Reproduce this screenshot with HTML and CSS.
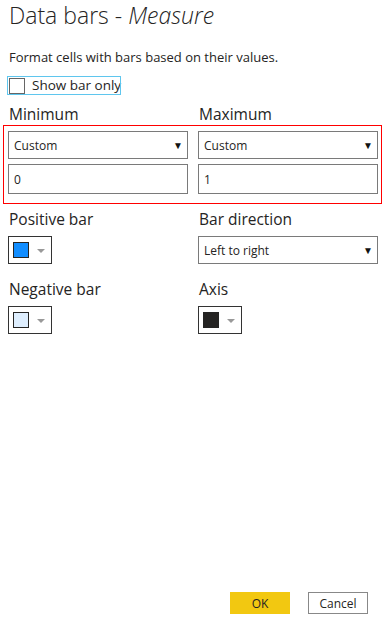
FILE: index.html
```html
<!DOCTYPE html>
<html>
<head>
<meta charset="utf-8">
<link rel="stylesheet" href="styles.css">
</head>
<body>
<div class="dialog">
  <h1 class="title">Data bars - <em>Measure</em></h1>
  <p class="desc">Format cells with bars based on their values.</p>
  <div class="check"><span class="box"></span><span class="check-label">Show bar only</span></div>

  <div class="cols labels-row">
    <div class="label">Minimum</div>
    <div class="label">Maximum</div>
  </div>
  <div class="range">
    <div class="select"><span>Custom</span><span class="arrow">&#9660;</span></div>
    <div class="select"><span>Custom</span><span class="arrow">&#9660;</span></div>
    <div class="input">0</div>
    <div class="input">1</div>
  </div>

  <div class="cols labels-row2">
    <div class="label">Positive bar</div>
    <div class="label">Bar direction</div>
  </div>
  <div class="cols">
    <div class="picker"><span class="swatch pos"></span><span class="caret"></span></div>
    <div class="select"><span>Left to right</span><span class="arrow">&#9660;</span></div>
  </div>

  <div class="cols labels-row3">
    <div class="label">Negative bar</div>
    <div class="label">Axis</div>
  </div>
  <div class="cols">
    <div class="picker"><span class="swatch neg"></span><span class="caret"></span></div>
    <div class="picker"><span class="swatch axis"></span><span class="caret"></span></div>
  </div>

  <div class="footer">
    <button class="btn ok">OK</button>
    <button class="btn cancel">Cancel</button>
  </div>
</div>
</body>
</html>
```

FILE: styles.css
```css
html, body {
  margin: 0;
  padding: 0;
  background: #ffffff;
}
body {
  font-family: "Open Sans", "Noto Sans", sans-serif;
  color: #252423;
}
.dialog {
  box-sizing: border-box;
  height: 620px;
  padding: 0 8px 6px 8px;
  display: flex;
  flex-direction: column;
}
.title {
  margin: 0;
  font-size: 23px;
  font-weight: 300;
  line-height: 30px;
  color: #252423;
  padding-left: 1px;
}
.title em {
  font-style: italic;
}
.desc {
  margin: 18px 0 0 1px;
  font-size: 13px;
  line-height: 18px;
}
.check {
  margin-top: 11px;
  display: flex;
  align-items: center;
  width: 112px;
  height: 17px;
  box-sizing: border-box;
  outline: 1px solid #5fc6ee;
  outline-offset: 0;
}
.box {
  box-sizing: border-box;
  flex: none;
  width: 16px;
  height: 16px;
  margin-left: 1px;
  border: 1px solid #666;
  background: #fff;
}
.check-label {
  margin-left: 7px;
  font-size: 13.5px;
  line-height: 17px;
  white-space: nowrap;
}
.cols {
  display: grid;
  grid-template-columns: 180px 180px;
  column-gap: 10px;
}
.label {
  font-size: 15.5px;
  line-height: 20px;
  padding-left: 1px;
}
.labels-row { margin-top: 10px; height: 20px; }
.labels-row2 { margin-top: 5px; height: 20px; margin-bottom: 7px; }
.labels-row3 { margin-top: 15px; height: 20px; margin-bottom: 7px; }
.range {
  margin: 1px 0 0 -5px;
  width: 379px;
  box-sizing: border-box;
  border: 1px solid #ff0000;
  padding: 5px 2px 9px 4px;
  display: grid;
  grid-template-columns: 180px 180px;
  column-gap: 10px;
  row-gap: 5px;
}
.select, .input {
  box-sizing: border-box;
  height: 28px;
  border: 1px solid #7a7a7a;
  display: flex;
  align-items: center;
  justify-content: space-between;
  padding: 0 4px 0 5px;
  font-size: 12px;
  background: #fff;
}
.input {
  height: 30px;
}
.arrow {
  font-size: 10px;
  color: #111;
}
.picker {
  box-sizing: border-box;
  width: 44px;
  height: 28px;
  border: 1px solid #333;
  display: flex;
  align-items: center;
  padding-left: 4px;
}
.swatch {
  box-sizing: border-box;
  width: 16px;
  height: 16px;
  border: 1px solid #252423;
}
.swatch.pos { background: #118dff; }
.swatch.neg { background: #deeefe; }
.swatch.axis { background: #252423; }
.caret {
  margin-left: 8px;
  width: 0;
  height: 0;
  border-left: 4px solid transparent;
  border-right: 4px solid transparent;
  border-top: 4px solid #999;
  margin-top: 1px;
}
.footer {
  margin-top: auto;
  display: flex;
  justify-content: flex-end;
  gap: 18px;
  padding-right: 11px;
}
.btn {
  width: 60px;
  height: 22px;
  box-sizing: border-box;
  font-family: "Open Sans", "Noto Sans", sans-serif;
  font-size: 12px;
  color: #252423;
  padding: 0;
  margin: 0;
  cursor: pointer;
}
.ok {
  background: #f2c811;
  border: none;
}
.cancel {
  background: #fff;
  border: 1px solid #888;
}
```
